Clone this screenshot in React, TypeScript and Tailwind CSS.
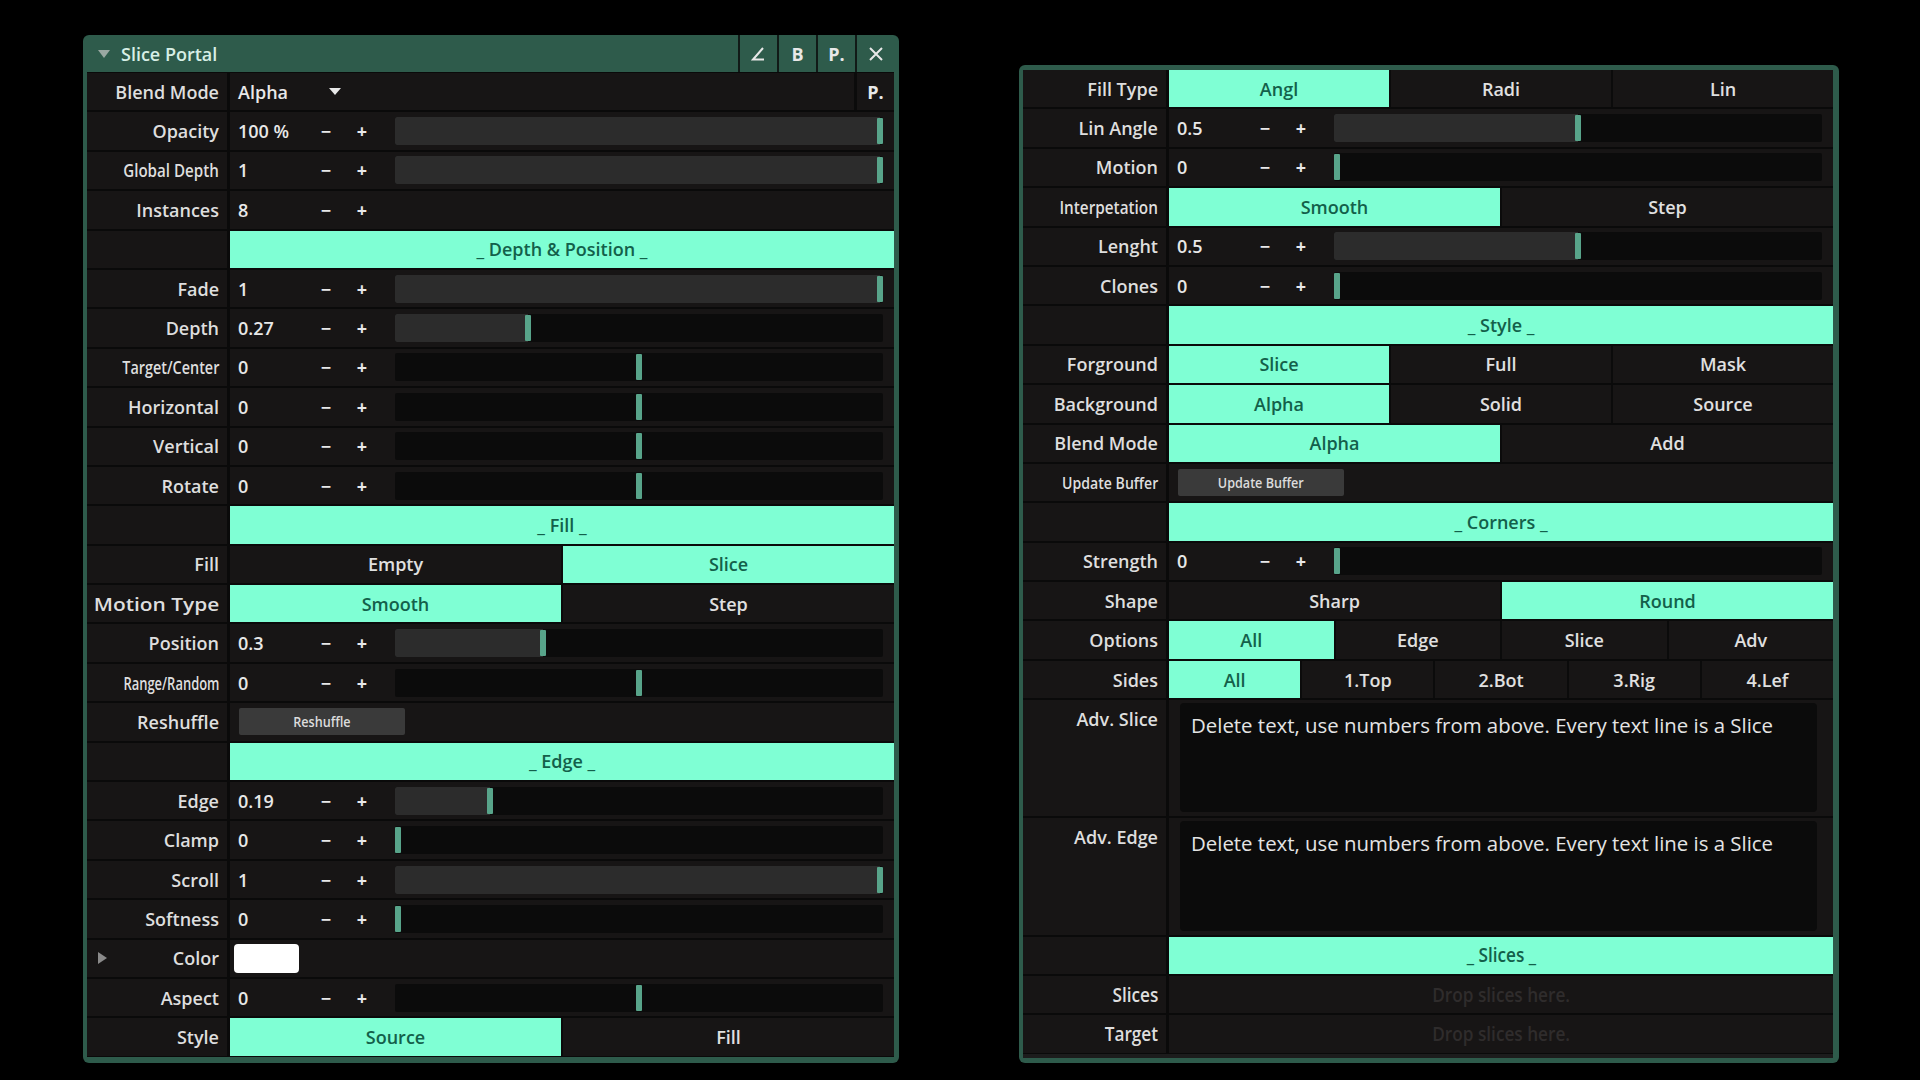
import React from 'react';

type RowDef =
  | { k: 'slider'; label: string; value: string; pos?: number; fill?: boolean; sc?: string; noSlider?: boolean }
  | { k: 'header'; text: string; sc?: string }
  | { k: 'toggle'; label: string; opts: string[]; active: number; sc?: string }
  | { k: 'button'; label: string; text: string; sc?: string }
  | { k: 'color'; label: string }
  | { k: 'blend'; label: string }
  | { k: 'text'; label: string; text: string }
  | { k: 'drop'; label: string; sc?: string };

const leftRows: RowDef[] = [
  { k: 'blend', label: 'Blend Mode' },
  { k: 'slider', label: 'Opacity', value: '100 %', pos: 1, fill: true },
  { k: 'slider', label: 'Global Depth', value: '1', pos: 1, fill: true, sc: 'scale-x-[0.84]' },
  { k: 'slider', label: 'Instances', value: '8', noSlider: true },
  { k: 'header', text: '_ Depth & Position _' },
  { k: 'slider', label: 'Fade', value: '1', pos: 1, fill: true },
  { k: 'slider', label: 'Depth', value: '0.27', pos: 0.27, fill: true },
  { k: 'slider', label: 'Target/Center', value: '0', pos: 0.5, sc: 'scale-x-[0.8]' },
  { k: 'slider', label: 'Horizontal', value: '0', pos: 0.5 },
  { k: 'slider', label: 'Vertical', value: '0', pos: 0.5 },
  { k: 'slider', label: 'Rotate', value: '0', pos: 0.5 },
  { k: 'header', text: '_ Fill _' },
  { k: 'toggle', label: 'Fill', opts: ['Empty', 'Slice'], active: 1 },
  { k: 'toggle', label: 'Motion Type', opts: ['Smooth', 'Step'], active: 0, sc: 'scale-x-[1.16]' },
  { k: 'slider', label: 'Position', value: '0.3', pos: 0.3, fill: true },
  { k: 'slider', label: 'Range/Random', value: '0', pos: 0.5, sc: 'scale-x-[0.72]' },
  { k: 'button', label: 'Reshuffle', text: 'Reshuffle' },
  { k: 'header', text: '_ Edge _' },
  { k: 'slider', label: 'Edge', value: '0.19', pos: 0.19, fill: true },
  { k: 'slider', label: 'Clamp', value: '0', pos: 0 },
  { k: 'slider', label: 'Scroll', value: '1', pos: 1, fill: true },
  { k: 'slider', label: 'Softness', value: '0', pos: 0 },
  { k: 'color', label: 'Color' },
  { k: 'slider', label: 'Aspect', value: '0', pos: 0.5 },
  { k: 'toggle', label: 'Style', opts: ['Source', 'Fill'], active: 0 },
];

const rightRows: RowDef[] = [
  { k: 'toggle', label: 'Fill Type', opts: ['Angl', 'Radi', 'Lin'], active: 0 },
  { k: 'slider', label: 'Lin Angle', value: '0.5', pos: 0.5, fill: true },
  { k: 'slider', label: 'Motion', value: '0', pos: 0 },
  { k: 'toggle', label: 'Interpetation', opts: ['Smooth', 'Step'], active: 0, sc: 'scale-x-[0.85]' },
  { k: 'slider', label: 'Lenght', value: '0.5', pos: 0.5, fill: true },
  { k: 'slider', label: 'Clones', value: '0', pos: 0 },
  { k: 'header', text: '_ Style _' },
  { k: 'toggle', label: 'Forground', opts: ['Slice', 'Full', 'Mask'], active: 0 },
  { k: 'toggle', label: 'Background', opts: ['Alpha', 'Solid', 'Source'], active: 0 },
  { k: 'toggle', label: 'Blend Mode', opts: ['Alpha', 'Add'], active: 0 },
  { k: 'button', label: 'Update Buffer', text: 'Update Buffer', sc: 'scale-x-[0.88] text-[16px]' },
  { k: 'header', text: '_ Corners _' },
  { k: 'slider', label: 'Strength', value: '0', pos: 0 },
  { k: 'toggle', label: 'Shape', opts: ['Sharp', 'Round'], active: 1 },
  { k: 'toggle', label: 'Options', opts: ['All', 'Edge', 'Slice', 'Adv'], active: 0 },
  { k: 'toggle', label: 'Sides', opts: ['All', '1.Top', '2.Bot', '3.Rig', '4.Lef'], active: 0 },
  { k: 'text', label: 'Adv. Slice', text: 'Delete text, use numbers from above. Every text line is a Slice' },
  { k: 'text', label: 'Adv. Edge', text: 'Delete text, use numbers from above. Every text line is a Slice' },
  { k: 'header', text: '_ Slices _', sc: 'scale-x-[0.86] text-[20px]' },
  { k: 'drop', label: 'Slices', sc: 'scale-x-[0.86] text-[20px]' },
  { k: 'drop', label: 'Target', sc: 'scale-x-[0.86] text-[20px]' },
];

function Slider({ pos, fill }: { pos: number; fill: boolean }) {
  return (
    <div className="relative ml-[13px] mr-[11px] h-[28px] flex-1 rounded-[2px] bg-[#0b0b0b]">
      {fill && (
        <div
          className="absolute inset-y-0 left-0 rounded-l-[2px] bg-[#2c2c2c]"
          style={{ width: `calc(${pos} * (100% - 6px) + 3px)` }}
        />
      )}
      <div
        className="absolute top-[1px] bottom-[1px] w-[6px] rounded-[1px] bg-[#58a48a]"
        style={{ left: `calc(${pos} * (100% - 6px))` }}
      />
    </div>
  );
}

function Label({ text, sc, lw }: { text: string; sc?: string; lw: string }) {
  return (
    <div className={`${lw} flex h-full shrink-0 items-center justify-end bg-[#171515] pr-[8px]`}>
      <span className={`inline-block origin-right whitespace-nowrap text-[#dedede] ${sc ?? ''}`}>{text}</span>
    </div>
  );
}

function Row({ r, lw }: { r: RowDef; lw: string }) {
  if (r.k === 'header') {
    return (
      <div className="flex h-[37.4px] gap-[3px]">
        <div className={`${lw} shrink-0 bg-[#171515]`} />
        <div className="flex flex-1 items-center justify-center bg-[#7fffd4] text-[#13604a]">
          <span className={`inline-block whitespace-nowrap ${r.sc ?? ''}`}>{r.text}</span>
        </div>
      </div>
    );
  }
  if (r.k === 'text') {
    return (
      <div className="flex h-[116.2px] gap-[3px]">
        <div className={`${lw} flex shrink-0 items-start justify-end bg-[#171515] pr-[8px]`}>
          <div className="flex h-[37.4px] items-center text-[#dedede]">{r.label}</div>
        </div>
        <div className="flex flex-1 bg-[#171515] pt-[3px] pb-[4px] pl-[11px] pr-[16px]">
          <div className="flex-1 rounded-[4px] bg-[#0b0b0b] px-[11px] pt-[10px] text-[20.4px] font-normal text-[#e4e4e4]">
            {r.text}
          </div>
        </div>
      </div>
    );
  }
  return (
    <div className="flex h-[37.4px] gap-[3px]">
      {r.k === 'color' ? (
        <div className={`${lw} flex h-full shrink-0 items-center justify-between bg-[#171515] pl-[11px] pr-[8px]`}>
          <svg width="9" height="12" viewBox="0 0 9 12">
            <path d="M0 0 L9 6 L0 12 Z" fill="#8a8a8a" />
          </svg>
          <span className="text-[#dedede]">{r.label}</span>
        </div>
      ) : (
        <Label
          text={r.label}
          sc={r.k === 'toggle' || r.k === 'slider' || r.k === 'button' || r.k === 'drop' ? r.sc : undefined}
          lw={lw}
        />
      )}
      {r.k === 'slider' && (
        <div className="flex flex-1 items-center bg-[#171515] text-[#e8e8e8]">
          <div className="w-[80px] shrink-0 pl-[8px]">{r.value}</div>
          <div className="w-[32px] shrink-0 text-center font-bold">−</div>
          <div className="w-[40px] shrink-0 text-center font-bold">+</div>
          {!r.noSlider && <Slider pos={r.pos ?? 0} fill={!!r.fill} />}
        </div>
      )}
      {r.k === 'toggle' && (
        <div className="flex flex-1 gap-[2px] bg-[#0b0b0b]">
          {r.opts.map((o, i) => (
            <div
              key={o + i}
              className={
                i === r.active
                  ? 'flex flex-1 items-center justify-center bg-[#7fffd4] text-[#13604a]'
                  : 'flex flex-1 items-center justify-center bg-[#171515] text-[#e0e0e0]'
              }
            >
              {o}
            </div>
          ))}
        </div>
      )}
      {r.k === 'button' && (
        <div className="flex flex-1 items-center bg-[#171515] pl-[9px]">
          <div className="flex h-[27px] w-[166px] items-center justify-center rounded-[2px] bg-[#3a3a3a] text-[14px] text-[#dcdcdc]">
            <span className="inline-block scale-x-[0.9]">{r.text}</span>
          </div>
        </div>
      )}
      {r.k === 'color' && (
        <div className="flex flex-1 items-center bg-[#171515] pl-[4px]">
          <div className="h-[29px] w-[65px] rounded-[4px] bg-white" />
        </div>
      )}
      {r.k === 'blend' && (
        <div className="flex flex-1 items-center bg-[#171515] text-[#e8e8e8]">
          <div className="w-[80px] shrink-0 pl-[8px]">Alpha</div>
          <svg className="ml-[19px]" width="12" height="7" viewBox="0 0 12 7">
            <path d="M0 0 H12 L6 7 Z" fill="#e8e8e8" />
          </svg>
          <div className="flex-1" />
          <div className="flex h-full w-[40px] items-center justify-center border-l-[3px] border-[#0b0b0b] font-bold">P.</div>
        </div>
      )}
      {r.k === 'drop' && (
        <div className="flex flex-1 items-center justify-center bg-[#171515] text-[#2f2c2c]">
          <span className="inline-block scale-x-[0.86] text-[20px]">Drop slices here.</span>
        </div>
      )}
    </div>
  );
}

function TitleBar() {
  return (
    <div className="flex h-[37px] items-stretch">
      <div className="flex flex-1 items-center pl-[11px]">
        <svg width="12" height="8" viewBox="0 0 12 8">
          <path d="M0 0 H12 L6 8 Z" fill="#9aa8a2" />
        </svg>
        <span className="ml-[11px] text-[#d7efe6]">Slice Portal</span>
      </div>
      <div className="flex w-[39px] items-center justify-center border-l-2 border-[#111a17]">
        <svg width="15" height="14" viewBox="0 0 15 14">
          <path d="M12 1 L2 12.5 H13" stroke="#e8e8e8" strokeWidth="2" fill="none" />
        </svg>
      </div>
      <div className="flex w-[39px] items-center justify-center border-l-2 border-[#111a17] font-bold text-[#e8e8e8]">B</div>
      <div className="flex w-[39px] items-center justify-center border-l-2 border-[#111a17] font-bold text-[#e8e8e8]">P.</div>
      <div className="flex w-[39px] items-center justify-center border-l-2 border-[#111a17]">
        <svg width="14" height="14" viewBox="0 0 14 14">
          <path d="M1 1 L13 13 M13 1 L1 13" stroke="#e8e8e8" strokeWidth="2" />
        </svg>
      </div>
    </div>
  );
}

export default function App() {
  return (
    <div className="flex min-h-screen w-full items-start gap-[120px] bg-black pl-[83px] pt-[35px] font-['Open_Sans',sans-serif] text-[18px] font-semibold leading-[24px]">
      <div className="w-[816px] rounded-[6px] bg-[#2e5b4b] pb-[6px] pl-[4px] pr-[5px]">
        <TitleBar />
        <div className="flex flex-col gap-[2px] bg-[#0a0a0a] py-[1px]">
          {leftRows.map((r, i) => (
            <Row key={i} r={r} lw="w-[140px]" />
          ))}
        </div>
      </div>
      <div className="mt-[30px] w-[820px] rounded-[6px] bg-[#2e5b4b] pb-[5px] pl-[4px] pr-[6px] pt-[5px]">
        <div className="flex flex-col gap-[2px] bg-[#0a0a0a] pb-[1px]">
          {rightRows.map((r, i) => (
            <Row key={i} r={r} lw="w-[143px]" />
          ))}
        </div>
        <div className="h-[4px] bg-[#1c1c1c]" />
      </div>
    </div>
  );
}
